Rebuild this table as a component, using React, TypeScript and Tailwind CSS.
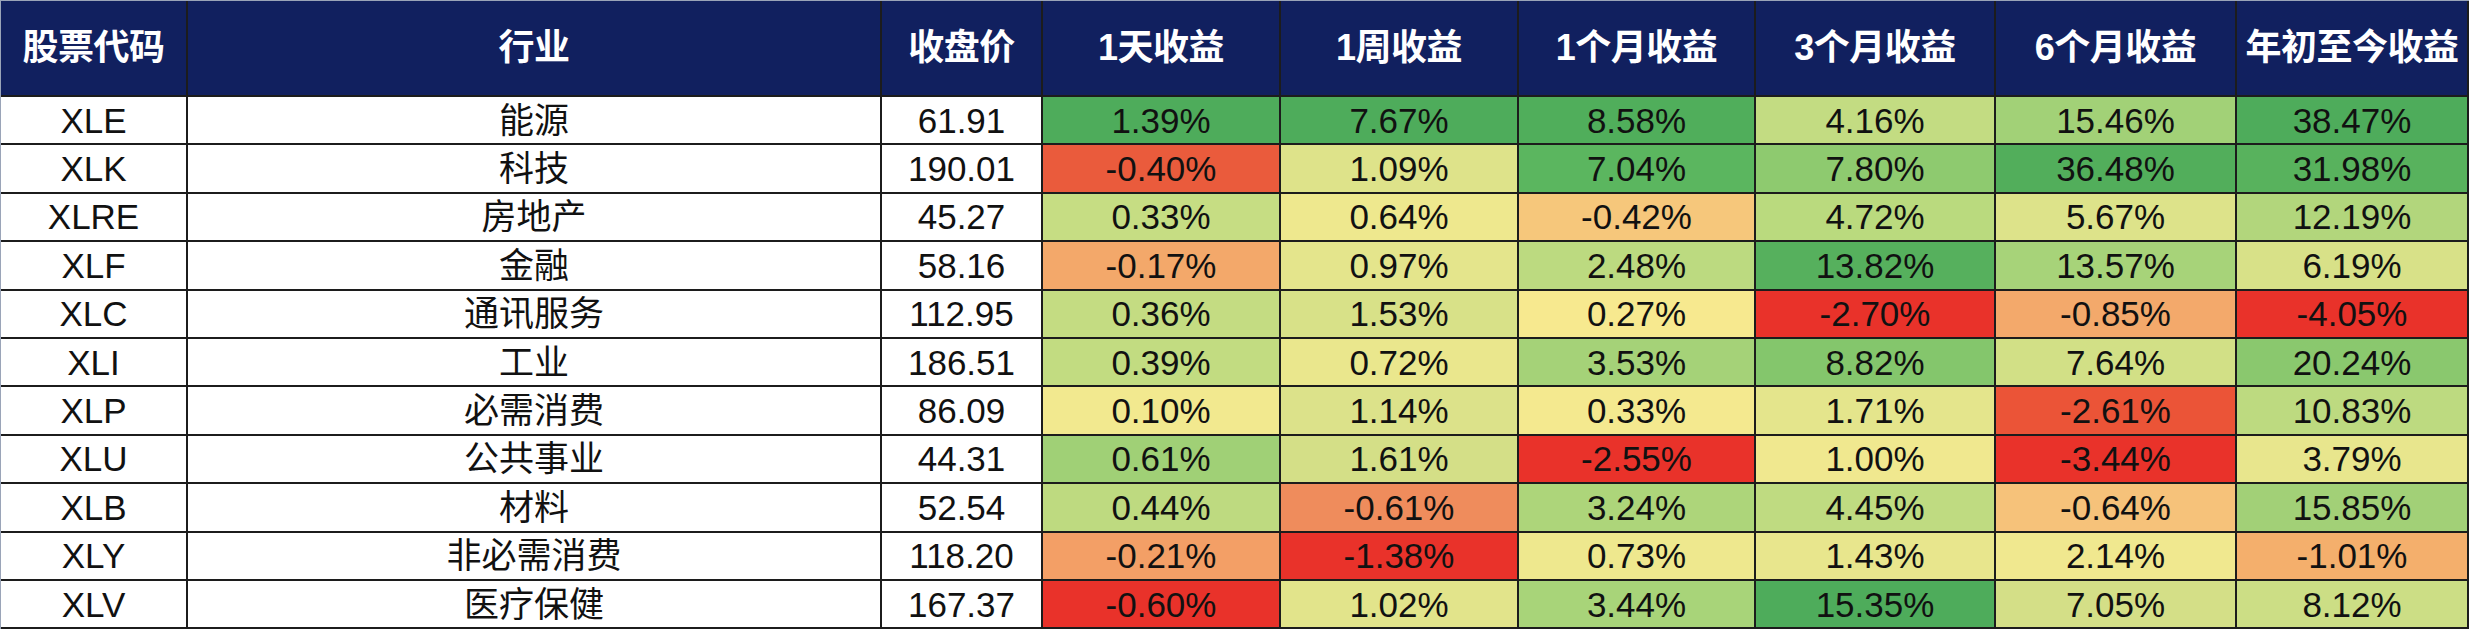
import React from "react";

type Row = { code: string; ind: string; price: string; vals: [string, string][] };

const rows: Row[] = [
  { code: "XLE", ind: "能源", price: "61.91", vals: [["1.39%", "#4EAC5B"], ["7.67%", "#4EAC5B"], ["8.58%", "#50AE5B"], ["4.16%", "#C3DC82"], ["15.46%", "#A2D177"], ["38.47%", "#4EAC5B"]] },
  { code: "XLK", ind: "科技", price: "190.01", vals: [["-0.40%", "#EA5B3C"], ["1.09%", "#DEE38A"], ["7.04%", "#5BB65F"], ["7.80%", "#8ECA6F"], ["36.48%", "#52AE5B"], ["31.98%", "#58B25D"]] },
  { code: "XLRE", ind: "房地产", price: "45.27", vals: [["0.33%", "#C6DD83"], ["0.64%", "#EEE88E"], ["-0.42%", "#F6C77B"], ["4.72%", "#BADA7E"], ["5.67%", "#DDE38A"], ["12.19%", "#B2D67C"]] },
  { code: "XLF", ind: "金融", price: "58.16", vals: [["-0.17%", "#F3A86A"], ["0.97%", "#E4E58C"], ["2.48%", "#BCDA80"], ["13.82%", "#56B05D"], ["13.57%", "#A7D379"], ["6.19%", "#D8E188"]] },
  { code: "XLC", ind: "通讯服务", price: "112.95", vals: [["0.36%", "#C4DC82"], ["1.53%", "#D8E188"], ["0.27%", "#F7E98F"], ["-2.70%", "#E9322A"], ["-0.85%", "#F3A96B"], ["-4.05%", "#E9322A"]] },
  { code: "XLI", ind: "工业", price: "186.51", vals: [["0.39%", "#C2DC81"], ["0.72%", "#EAE78D"], ["3.53%", "#A5D278"], ["8.82%", "#84C66C"], ["7.64%", "#D2E086"], ["20.24%", "#8AC86E"]] },
  { code: "XLP", ind: "必需消费", price: "86.09", vals: [["0.10%", "#F2E98F"], ["1.14%", "#DCE28A"], ["0.33%", "#F4E98F"], ["1.71%", "#E4E58C"], ["-2.61%", "#EB5437"], ["10.83%", "#BDDA80"]] },
  { code: "XLU", ind: "公共事业", price: "44.31", vals: [["0.61%", "#A0D076"], ["1.61%", "#D4DF87"], ["-2.55%", "#E9322A"], ["1.00%", "#F0E88F"], ["-3.44%", "#E9322A"], ["3.79%", "#E8E68D"]] },
  { code: "XLB", ind: "材料", price: "52.54", vals: [["0.44%", "#BEDA80"], ["-0.61%", "#EF8C5C"], ["3.24%", "#ADD57A"], ["4.45%", "#BFDB81"], ["-0.64%", "#F6C27A"], ["15.85%", "#A2D077"]] },
  { code: "XLY", ind: "非必需消费", price: "118.20", vals: [["-0.21%", "#F39F66"], ["-1.38%", "#E9322A"], ["0.73%", "#EEE88E"], ["1.43%", "#E8E68D"], ["2.14%", "#F0E88F"], ["-1.01%", "#F4AF6C"]] },
  { code: "XLV", ind: "医疗保健", price: "167.37", vals: [["-0.60%", "#E9322A"], ["1.02%", "#E2E48B"], ["3.44%", "#A8D479"], ["15.35%", "#4EAC5B"], ["7.05%", "#D4DF87"], ["8.12%", "#CCDE85"]] },
];

const headers = ["股票代码", "行业", "收盘价", "1天收益", "1周收益", "1个月收益", "3个月收益", "6个月收益", "年初至今收益"];

const font = { fontFamily: '"Liberation Sans", "Noto Sans CJK SC", sans-serif' };

export default function App() {
  return (
    <div className="w-[2478px] h-[634px] bg-white overflow-hidden" style={font}>
      <div className="w-[2469px] border-l border-t border-[#9aa4b8]">
        <div className="grid grid-cols-[185px_692px_159px_236px_236px_235px_238px_239px_230px] grid-rows-[94px_repeat(11,46.4px)] gap-[2px] pr-[2px] pb-[2px] bg-[#1c1c1c]">
          {headers.map((h) => (
            <div key={h} className="bg-[#11205F] text-white font-bold text-[36px] leading-none flex items-center justify-center whitespace-nowrap tracking-[-0.5px]">
              {h}
            </div>
          ))}
          {rows.map((r) => (
            <React.Fragment key={r.code}>
              <div className="bg-white text-[35px] leading-none text-[#111] flex items-center justify-center">{r.code}</div>
              <div className="bg-white text-[35px] leading-none text-[#111] flex items-center justify-center">{r.ind}</div>
              <div className="bg-white text-[35px] leading-none text-[#111] flex items-center justify-center">{r.price}</div>
              {r.vals.map(([v, c], i) => (
                <div key={i} className="text-[35px] leading-none text-[#111] flex items-center justify-center" style={{ backgroundColor: c }}>
                  {v}
                </div>
              ))}
            </React.Fragment>
          ))}
        </div>
      </div>
    </div>
  );
}
